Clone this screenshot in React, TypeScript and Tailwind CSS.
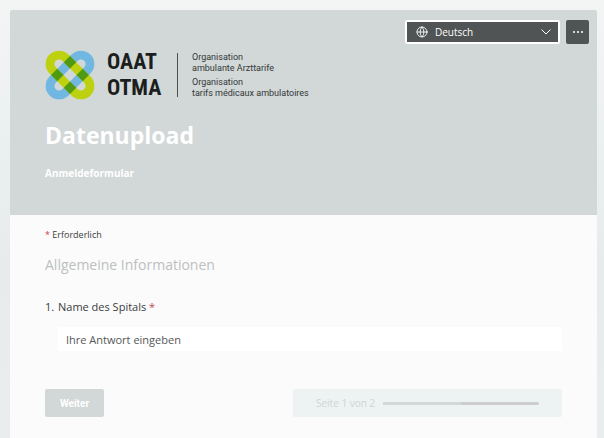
import { Globe } from 'lucide-react';

const LANGUAGES = ['Deutsch', 'Français', 'Italiano', 'English'];

const PAGE = 1;
const PAGE_COUNT = 2;

// Centres of the four crossings, in the rotated coordinates of the mark
const CROSSINGS = [[-9, -9], [9, -9], [-9, 9], [9, 9]];

function LogoMark() {
  return (
    <svg viewBox="-25 -25 50 50" className="size-[50px] shrink-0" aria-hidden="true">
      <g transform="rotate(45)" fill="none" strokeWidth="8.8">
        <rect x="-9" y="-24.5" width="18" height="49" rx="9" stroke="#70b8e2" />
        <rect x="-24.5" y="-9" width="49" height="18" rx="9" stroke="#bdd10f" />
        {CROSSINGS.map(([x, y]) => (
          <rect key={`${x},${y}`} x={x - 4.4} y={y - 4.4} width="8.8" height="8.8" fill="#4f9a12" stroke="none" />
        ))}
      </g>
    </svg>
  );
}

function Logo() {
  return (
    <div className="flex items-center text-[#1c1e1e]">
      <LogoMark />
      <div className="ml-3 w-[58px] font-['Roboto_Condensed','Roboto',sans-serif] text-[22px] leading-[26px] font-bold">
        <div>OAAT</div>
        <div>OTMA</div>
      </div>
      <div className="ml-3 h-11 w-px bg-[#4b4f4f]" />
      <div className="ml-3.5 font-['Roboto',sans-serif] text-[9px] leading-[11px] text-[#333737]">
        <p>Organisation<br />ambulante Arzttarife</p>
        <p className="mt-[3px]">Organisation<br />tarifs médicaux ambulatoires</p>
      </div>
    </div>
  );
}

function LanguageBar() {
  return (
    <div className="flex justify-end gap-1.5">
      <div className="relative w-[155px]">
        <Globe className="pointer-events-none absolute top-1.5 left-[11px] size-3 text-white" strokeWidth={1.8} />
        <select
          aria-label="Sprache"
          defaultValue="Deutsch"
          className="block h-6 w-full appearance-none rounded-xs border-2 border-white bg-[#505454] pl-7 text-[10px] text-white"
        >
          {LANGUAGES.map(language => <option key={language}>{language}</option>)}
        </select>
        <svg
          viewBox="0 0 10 6"
          className="pointer-events-none absolute top-[9px] right-[9px] h-1.5 w-2.5"
          fill="none"
          stroke="white"
          aria-hidden="true"
        >
          <path d="M0.5 0.5 5 5 9.5 0.5" />
        </svg>
      </div>
      <button
        type="button"
        aria-label="Weitere Optionen"
        className="flex h-6 w-[23px] items-center justify-center rounded-xs bg-[#505454]"
      >
        <svg viewBox="0 0 10 2" className="h-0.5 w-2.5" fill="white" aria-hidden="true">
          <circle cx="1" cy="1" r="1" />
          <circle cx="5" cy="1" r="1" />
          <circle cx="9" cy="1" r="1" />
        </svg>
      </button>
    </div>
  );
}

function Required() {
  return <span className="text-[#c4474f]">*</span>;
}

function PageProgress() {
  return (
    <div className="flex h-7 w-[269px] items-center gap-2 rounded-xs bg-[#edf3f2] px-[23px] text-[10px] text-[#cfd5d5]">
      <span>Seite {PAGE} von {PAGE_COUNT}</span>
      <div className="h-[3px] flex-1 overflow-hidden rounded-full bg-[#cecdcd]">
        <div className="h-full bg-[#d2d8d7]" style={{ width: `${(PAGE / PAGE_COUNT) * 100}%` }} />
      </div>
    </div>
  );
}

export default function App() {
  return (
    <div className="min-h-screen bg-linear-to-b from-[#f3f5f5] via-[#e7ebec] via-60% to-[#e9eded] pt-2.5 pr-[7px] pl-2.5 font-['Open_Sans',sans-serif]">
      <main className="flex min-h-[calc(100vh-10px)] flex-col overflow-hidden rounded-t-xs bg-[#fbfbfb]">
        <header className="bg-[#d2d8d8] pb-[34px] text-white">
          <div className="px-2 pt-2.5">
            <LanguageBar />
          </div>
          <div className="px-[35px] pt-[5px]">
            <Logo />
            <h1 className="mt-4 text-[23px] leading-9 font-bold">Datenupload</h1>
            <p className="mt-3 text-[10px] leading-4 font-bold">Anmeldeformular</p>
          </div>
        </header>

        <form className="px-[35px] pt-3 text-[#3a3d3d]" onSubmit={e => e.preventDefault()}>
          <p className="text-[9px] leading-4"><Required /> Erforderlich</p>
          <h2 className="mt-3 text-sm leading-5 text-[#bcc0c0]">Allgemeine Informationen</h2>

          <div className="mt-[22px] flex text-[11px] leading-5">
            <span className="w-[13px] shrink-0">1.</span>
            <div className="flex-1">
              <label htmlFor="hospital">Name des Spitals <Required /></label>
              <input
                id="hospital"
                type="text"
                placeholder="Ihre Antwort eingeben"
                className="mt-2.5 block h-6 w-full rounded-xs bg-white px-2 placeholder:text-[#555858]"
              />
            </div>
          </div>

          <div className="mt-[38px] flex items-center justify-between">
            <button type="submit" className="h-7 w-[59px] rounded-xs bg-[#d2d8d7] font-['Roboto',sans-serif] text-[10px] font-bold text-white">
              Weiter
            </button>
            <PageProgress />
          </div>
        </form>
      </main>
    </div>
  );
}
